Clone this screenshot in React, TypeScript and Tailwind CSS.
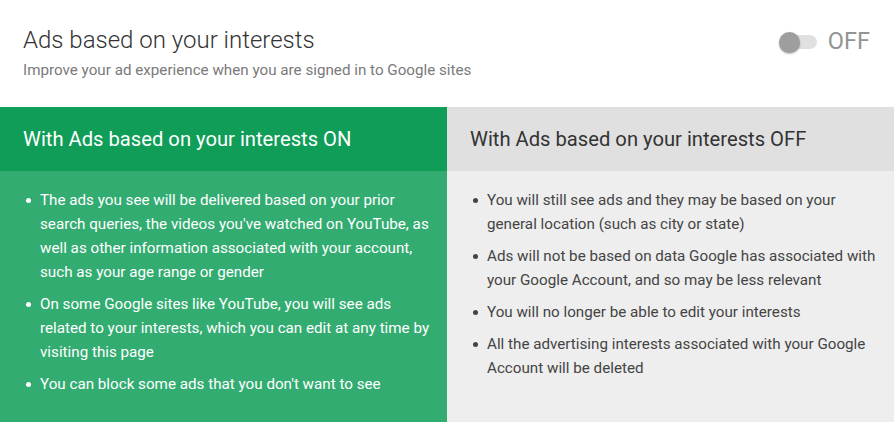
import React from 'react';

const onItems = [
  "The ads you see will be delivered based on your prior search queries, the videos you've watched on YouTube, as well as other information associated with your account, such as your age range or gender",
  'On some Google sites like YouTube, you will see ads related to your interests, which you can edit at any time by visiting this page',
  "You can block some ads that you don't want to see",
];

const offItems = [
  'You will still see ads and they may be based on your general location (such as city or state)',
  'Ads will not be based on data Google has associated with your Google Account, and so may be less relevant',
  'You will no longer be able to edit your interests',
  'All the advertising interests associated with your Google Account will be deleted',
];

const Panel: React.FC<{ title: string; items: string[]; on?: boolean }> = ({ title, items, on }) => (
  <div className={`flex flex-col flex-1 ${on ? 'bg-[#33ac71] text-white' : 'bg-[#eeeeee] text-[#444444]'}`}>
    <div className={`h-[64px] flex items-center px-[23px] text-[20.2px] ${on ? 'bg-[#0f9d58]' : 'bg-[#e0e0e0] text-[#333333]'}`}>
      {title}
    </div>
    <ul className="pt-[17px] pl-[40px] pr-[10px] flex flex-col gap-[8px] text-[15.2px] leading-[24px]">
      {items.map((t) => (
        <li key={t} className="relative">
          <span className={`absolute left-[-14px] top-[10px] w-[5px] h-[5px] rounded-full ${on ? 'bg-white' : 'bg-[#444444]'}`} />
          {t}
        </li>
      ))}
    </ul>
  </div>
);

export default function App() {
  return (
    <div className="w-[894px] h-[422px] bg-white overflow-hidden flex flex-col" style={{ fontFamily: 'Roboto, "Noto Sans", sans-serif' }}>
      <div className="h-[107px] flex justify-between pl-[23px] pr-[24px] pt-[24px]">
        <div>
          <div className="text-[24px] font-light text-[#333333] leading-[32px]">Ads based on your interests</div>
          <div className="text-[15.2px] text-[#7a7a7a] mt-[4px] leading-[20px]">Improve your ad experience when you are signed in to Google sites</div>
        </div>
        <div className="flex items-center gap-[11px] h-[36px]">
          <div className="relative w-[38px] h-[20px] flex items-center">
            <div className="absolute left-[10px] right-0 h-[14px] rounded-full bg-[#e0e0e0]" />
            <div className="absolute left-0 w-[21px] h-[21px] rounded-full bg-[#9e9e9e] shadow-[0_1px_2px_rgba(0,0,0,0.3)]" />
          </div>
          <div className="text-[23.5px] text-[#939393]">OFF</div>
        </div>
      </div>
      <div className="flex flex-1">
        <Panel title="With Ads based on your interests ON" items={onItems} on />
        <Panel title="With Ads based on your interests OFF" items={offItems} />
      </div>
    </div>
  );
}
